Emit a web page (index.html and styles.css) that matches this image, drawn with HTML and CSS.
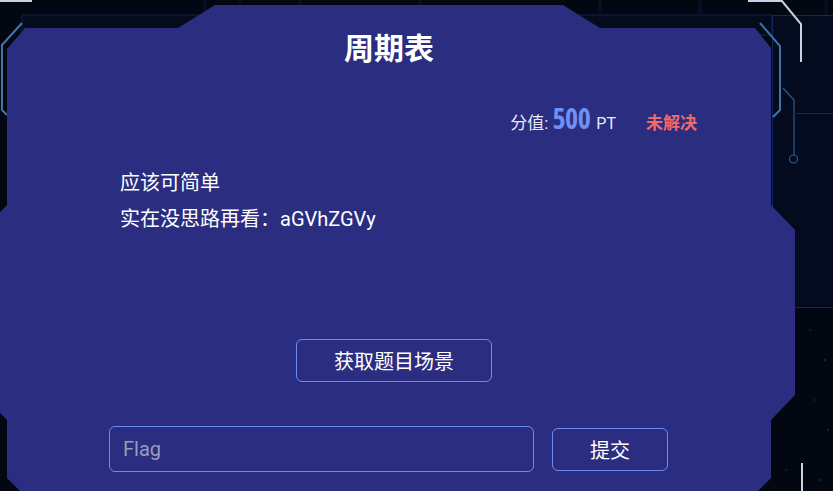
FILE: index.html
```html
<!DOCTYPE html>
<html lang="zh-CN">
<head>
<meta charset="utf-8">
<title>周期表</title>
<link rel="stylesheet" href="styles.css">
</head>
<body>
<div class="stage">
  <svg class="bg" width="833" height="491" viewBox="0 0 833 491" aria-hidden="true">
    <defs>
      <linearGradient id="fadeL" x1="0" y1="0" x2="1" y2="0">
        <stop offset="0" stop-color="#4a86bd"/>
        <stop offset="1" stop-color="#4a86bd" stop-opacity="0"/>
      </linearGradient>
      <linearGradient id="fadeR" x1="0" y1="0" x2="1" y2="0">
        <stop offset="0" stop-color="#3f73a6" stop-opacity="0"/>
        <stop offset="1" stop-color="#3f73a6"/>
      </linearGradient>
    </defs>
    <!-- faint streaks -->
    <g stroke="#08152f" stroke-width="3" opacity="0.7">
      <line x1="205" y1="0" x2="205" y2="14"/>
      <line x1="240" y1="0" x2="240" y2="14"/>
      <line x1="300" y1="0" x2="300" y2="5"/>
      <line x1="420" y1="0" x2="420" y2="5"/>
      <line x1="600" y1="0" x2="600" y2="14"/>
      <line x1="700" y1="0" x2="700" y2="14"/>
      <line x1="815" y1="120" x2="815" y2="300"/>
      <line x1="826" y1="0" x2="826" y2="300"/>
    </g>
    <!-- dark band behind panel top -->
    <rect x="22" y="15" width="750" height="20" fill="#040b1d" stroke="#0d2247" stroke-width="1"/>
    <!-- right dark box -->
    <rect x="772.5" y="15.5" width="70" height="292" fill="#050b1f" stroke="#10295a" stroke-width="1"/>
    <!-- left cyan frame -->
    <polyline points="7,115 2,110 2,45 22,23" fill="none" stroke="#3f74a8" stroke-width="2"/>
    <line x1="22" y1="23" x2="66" y2="23" stroke="url(#fadeL)" stroke-width="2"/>
    <!-- right cyan frame -->
    <line x1="712" y1="23" x2="760" y2="23" stroke="url(#fadeR)" stroke-width="2"/>
    <polyline points="760,23 780,46 780,110 773,117" fill="none" stroke="#3f74a8" stroke-width="2"/>
    <!-- silver lines -->
    <polyline points="748,1 782,1 801,24 801,62" fill="none" stroke="#c9d2de" stroke-width="2"/>
    <line x1="0" y1="1" x2="32" y2="1" stroke="#c9d2de" stroke-width="2"/>
    <line x1="802" y1="463" x2="802" y2="491" stroke="#c9d2de" stroke-width="2"/>
    <!-- thin circuit -->
    <polyline points="783,88 794,100 794,155" fill="none" stroke="#2c5a8c" stroke-width="1.2"/>
    <circle cx="793.5" cy="159" r="4" fill="none" stroke="#2c5a8c" stroke-width="1.2"/>
    <line x1="793" y1="113.5" x2="833" y2="113.5" stroke="#12284d" stroke-width="1"/>
    <!-- dots -->
    <g fill="#0b2550">
      <circle cx="12" cy="450" r="1.2"/>
      <circle cx="810" cy="330" r="1"/>
      <circle cx="825" cy="360" r="1.2"/>
      <circle cx="815" cy="400" r="1"/>
      <circle cx="828" cy="430" r="1.2"/>
      <circle cx="786" cy="470" r="1"/>
      <circle cx="820" cy="480" r="1.2"/>
    </g>
  </svg>

  <section class="panel">
    <h1 class="title">周期表</h1>
    <div class="meta">
      <span class="label">分值:</span>
      <span class="score">500</span>
      <span class="unit">PT</span>
      <span class="status">未解决</span>
    </div>
    <div class="hint">
      <p>应该可简单</p>
      <p>实在没思路再看：aGVhZGVy</p>
    </div>
    <button class="scene" type="button">获取题目场景</button>
    <form class="flag-form" onsubmit="return false">
      <input class="flag-input" type="text" placeholder="Flag">
      <button class="submit" type="submit">提交</button>
    </form>
  </section>
</div>
</body>
</html>
```
FILE: styles.css
```css
* { box-sizing: border-box; }

body {
  margin: 0;
  background: #020711;
  font-family: Roboto, "Noto Sans CJK SC", sans-serif;
}

.stage {
  position: relative;
  width: 833px;
  height: 491px;
  overflow: hidden;
  padding-top: 5px;
}

.bg {
  position: absolute;
  left: 0;
  top: 0;
}

.panel {
  position: relative;
  margin-left: -17px;
  width: 812px;
  height: 486px;
  background: #2b2d80;
  color: #fff;
  display: flex;
  flex-direction: column;
  clip-path: polygon(24px 44px, 42px 23px, 195px 23px, 232px 0, 580px 0, 617px 23px, 772px 23px, 788px 43px,
    788px 200px, 812px 225px, 812px 390px, 788px 415px, 788px 473px, 775px 486px,
    37px 486px, 24px 473px, 24px 415px, 0 390px, 0 225px, 24px 200px);
}

.title {
  margin: 26px 0 0;
  font-size: 30px;
  line-height: 30px;
  font-weight: 700;
  text-align: center;
  font-family: "Noto Sans CJK SC", sans-serif;
}

.meta {
  margin-top: 42px;
  height: 30px;
  padding-right: 98px;
  display: flex;
  justify-content: flex-end;
  align-items: baseline;
  font-size: 16px;
  line-height: 30px;
}

.label {
  color: #e8e9f5;
  font-size: 17px;
}

.score {
  margin-left: 4px;
  color: #6f8ff2;
  font-family: "Open Sans", sans-serif;
  font-stretch: 75%;
  font-weight: 700;
  font-size: 28px;
  letter-spacing: -0.5px;
}

.unit {
  margin-left: 6px;
  color: #e8e9f5;
}

.status {
  margin-left: 30px;
  color: #f06a6b;
  font-weight: 700;
  font-size: 17px;
}

.hint {
  margin: 32px 0 0 137px;
  font-size: 20px;
  line-height: 36px;
}

.hint p {
  margin: 0;
}

.scene {
  align-self: flex-start;
  margin: 102px 0 0 313px;
  width: 196px;
  height: 43px;
  border: 1px solid #6d8cf2;
  border-radius: 6px;
  background: transparent;
  color: #fff;
  font: 20px Roboto, "Noto Sans CJK SC", sans-serif;
}

.flag-form {
  margin: 44px 0 0 126px;
  display: flex;
  align-items: center;
  gap: 18px;
}

.flag-input {
  width: 425px;
  height: 46px;
  padding: 0 13px;
  border: 1px solid #6d8cf2;
  border-radius: 6px;
  background: transparent;
  color: #fff;
  font: 20px Roboto, "Noto Sans CJK SC", sans-serif;
  outline: none;
}

.flag-input::placeholder {
  color: #9a9cb9;
}

.submit {
  width: 116px;
  height: 43px;
  border: 1px solid #6d8cf2;
  border-radius: 6px;
  background: transparent;
  color: #fff;
  font: 20px Roboto, "Noto Sans CJK SC", sans-serif;
}
```
